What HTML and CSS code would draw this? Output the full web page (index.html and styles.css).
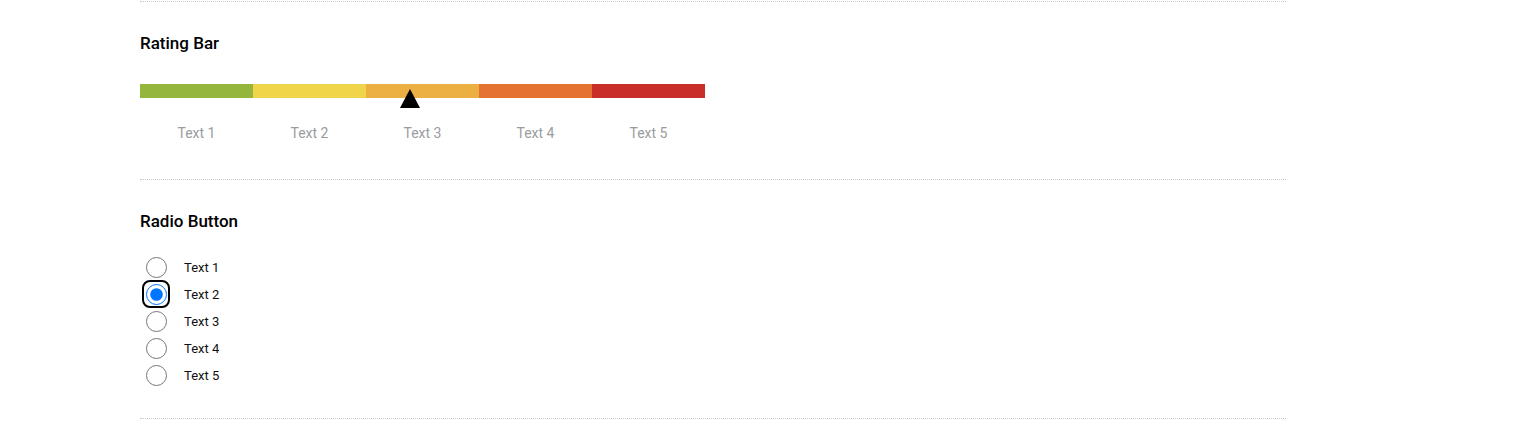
FILE: index.html
```html
<!DOCTYPE html>
<html lang="en">
<head>
<meta charset="utf-8">
<title>Components</title>
<link rel="stylesheet" href="styles.css">
</head>
<body>
<main class="page">
  <section class="section">
    <h2 class="section-title">Rating Bar</h2>
    <div class="rating">
      <div class="rating-track">
        <div class="seg seg-1"></div>
        <div class="seg seg-2"></div>
        <div class="seg seg-3"></div>
        <div class="seg seg-4"></div>
        <div class="seg seg-5"></div>
        <div class="rating-marker"></div>
      </div>
      <div class="rating-labels">
        <span>Text 1</span>
        <span>Text 2</span>
        <span>Text 3</span>
        <span>Text 4</span>
        <span>Text 5</span>
      </div>
    </div>
  </section>
  <section class="section">
    <h2 class="section-title">Radio Button</h2>
    <div class="radio-list">
      <label class="radio-row"><span class="radio-wrap"><input type="radio" name="r" class="radio"></span><span>Text 1</span></label>
      <label class="radio-row"><span class="radio-wrap is-focused"><input type="radio" name="r" class="radio" checked></span><span>Text 2</span></label>
      <label class="radio-row"><span class="radio-wrap"><input type="radio" name="r" class="radio"></span><span>Text 3</span></label>
      <label class="radio-row"><span class="radio-wrap"><input type="radio" name="r" class="radio"></span><span>Text 4</span></label>
      <label class="radio-row"><span class="radio-wrap"><input type="radio" name="r" class="radio"></span><span>Text 5</span></label>
    </div>
  </section>
  <div class="end-rule"></div>
</main>
</body>
</html>
```

FILE: styles.css
```css
html, body {
  margin: 0;
  padding: 0;
  background: #fff;
}
body {
  font-family: Roboto, "Liberation Sans", Arial, sans-serif;
  color: #000;
}
.page {
  width: 1146px;
  margin-left: 140px;
  padding-top: 1px;
}
.section {
  border-top: 1px dotted #c8c8c8;
}
.section:first-child {
  padding: 31px 0 38px;
}
.section:nth-child(2) {
  padding: 31px 0 29px;
}
.section-title {
  margin: 0;
  font-size: 17px;
  line-height: 20px;
  font-weight: 500;
  color: #000;
}
.rating {
  width: 565px;
  margin-top: 31px;
}
.rating-track {
  position: relative;
  display: flex;
  height: 14px;
}
.seg {
  flex: 1;
}
.seg-1 { background: #95b63c; }
.seg-2 { background: #f0d44a; }
.seg-3 { background: #ebb041; }
.seg-4 { background: #e57132; }
.seg-5 { background: #c92f28; }
.rating-marker {
  position: absolute;
  left: 260px;
  top: 5px;
  width: 0;
  height: 0;
  border-left: 10px solid transparent;
  border-right: 10px solid transparent;
  border-bottom: 19px solid #000;
}
.rating-labels {
  display: flex;
  margin-top: 27px;
}
.rating-labels span {
  flex: 1;
  text-align: center;
  font-size: 14px;
  line-height: 16px;
  color: #9a9ca0;
}
.radio-list {
  margin-top: 23px;
  display: flex;
  flex-direction: column;
}
.radio-row {
  display: flex;
  align-items: center;
  height: 27px;
  font-size: 13px;
  color: #111;
}
.radio-wrap {
  position: relative;
  display: inline-flex;
  margin: 0 17px 0 6px;
}
.radio {
  width: 21px;
  height: 21px;
  margin: 0;
}
.radio-wrap.is-focused::after {
  content: "";
  position: absolute;
  left: -4px;
  top: -4px;
  right: -3px;
  bottom: -3px;
  border: 2px solid #000;
  border-radius: 8px;
  pointer-events: none;
}
.end-rule {
  border-top: 1px dotted #c8c8c8;
}
```
